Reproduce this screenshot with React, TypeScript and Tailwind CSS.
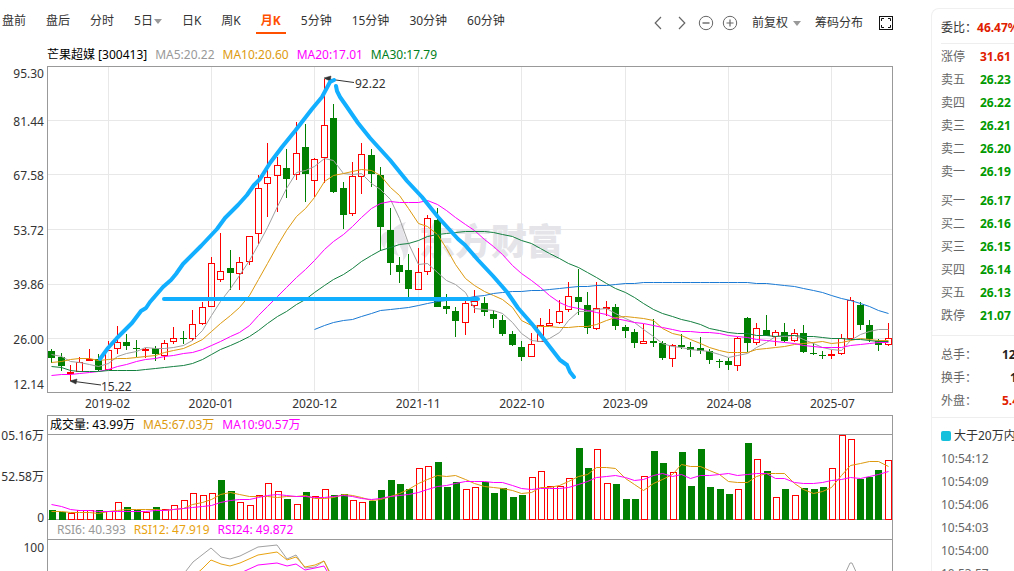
import React from 'react';

type Candle = [dir: 'u' | 'd', high: number, top: number, bottom: number, low: number];

const candles: Candle[] = [
  ['d', 349, 351, 358, 363], ['d', 353, 357, 366, 371], ['u', 365, 372, 373, 381],
  ['u', 357, 362, 371, 372], ['u', 349, 359, 360, 361], ['d', 354, 359, 370, 371],
  ['u', 341, 350, 369, 370], ['u', 326, 342, 348, 354], ['d', 334, 342, 346, 350],
  ['d', 340, 348, 349, 357], ['u', 348, 349, 350, 358], ['d', 346, 348, 354, 361],
  ['u', 340, 343, 355, 360], ['u', 327, 338, 341, 344], ['d', 331, 338, 339, 344],
  ['u', 310, 324, 338, 341], ['u', 302, 307, 323, 325], ['u', 257, 263, 306, 306],
  ['u', 233, 271, 279, 282], ['d', 250, 268, 273, 290], ['u', 257, 262, 273, 290],
  ['u', 236, 236, 261, 265], ['u', 175, 188, 233, 244], ['u', 143, 177, 183, 217],
  ['u', 157, 165, 175, 212], ['d', 149, 168, 179, 198], ['u', 122, 153, 174, 180],
  ['d', 124, 147, 174, 202], ['u', 158, 159, 180, 197], ['u', 79, 125, 157, 183],
  ['d', 104, 118, 192, 193], ['d', 182, 188, 215, 229], ['u', 162, 176, 213, 216],
  ['u', 143, 154, 176, 194], ['d', 149, 155, 174, 187], ['d', 167, 175, 227, 251],
  ['d', 208, 230, 263, 275], ['d', 257, 265, 272, 283], ['d', 254, 270, 289, 297],
  ['u', 248, 272, 289, 290], ['u', 215, 218, 271, 275], ['d', 208, 220, 307, 307],
  ['d', 294, 306, 309, 314], ['d', 307, 311, 321, 337], ['u', 300, 303, 322, 335],
  ['u', 290, 301, 305, 313], ['d', 297, 303, 312, 316], ['d', 310, 314, 319, 328],
  ['d', 315, 320, 334, 336], ['d', 331, 334, 345, 346], ['d', 341, 347, 357, 361],
  ['u', 333, 344, 356, 357], ['u', 318, 325, 341, 342], ['u', 309, 323, 325, 326],
  ['u', 300, 311, 322, 324], ['u', 282, 296, 309, 312], ['d', 269, 297, 302, 315],
  ['d', 292, 305, 328, 334], ['u', 282, 308, 328, 330], ['u', 301, 307, 308, 316],
  ['d', 304, 307, 326, 330], ['d', 325, 327, 331, 338], ['d', 329, 332, 343, 348],
  ['u', 324, 341, 343, 344], ['d', 319, 341, 343, 347], ['d', 341, 343, 358, 360],
  ['u', 344, 345, 358, 367], ['d', 334, 345, 347, 349], ['d', 342, 347, 350, 357],
  ['d', 337, 348, 351, 354], ['d', 349, 351, 360, 364], ['d', 359, 361, 362, 368],
  ['d', 358, 361, 365, 370], ['u', 337, 338, 365, 371], ['d', 317, 318, 343, 352],
  ['u', 323, 328, 342, 345], ['d', 315, 330, 336, 336], ['u', 330, 332, 336, 346],
  ['d', 323, 332, 341, 342], ['u', 329, 333, 340, 342], ['d', 325, 333, 352, 353],
  ['d', 343, 353, 354, 355], ['d', 351, 355, 356, 359], ['u', 350, 354, 355, 359],
  ['u', 334, 338, 353, 355], ['u', 297, 300, 338, 339], ['d', 302, 305, 325, 330],
  ['d', 320, 325, 339, 342], ['d', 339, 341, 345, 351], ['u', 323, 338, 344, 346],
];

const ma5 = [
  354, 356, 361, 362, 364, 366, 363, 356, 353, 351, 347, 348, 348, 347, 345, 340, 330, 315, 301, 288,
  275, 260, 244, 227, 206, 188, 172, 170, 166, 158, 160, 173, 174, 173, 183, 189, 199, 218, 243, 264,
  263, 272, 280, 284, 292, 308, 309, 310, 313, 322, 333, 340, 341, 338, 332, 320, 311, 311, 309, 308,
  313, 318, 322, 329, 336, 343, 346, 347, 349, 350, 351, 354, 357, 355, 353, 347, 342, 336, 336, 335,
  339, 343, 347, 349, 350, 340, 334, 331, 329, 329,
];
const ma10 = [
  362, 361, 359, 358, 358, 360, 359, 358, 358, 357, 356, 355, 352, 350, 348, 344, 339, 331, 323, 315,
  307, 295, 279, 263, 245, 230, 216, 208, 197, 181, 175, 173, 171, 169, 170, 175, 187, 195, 208, 223,
  226, 234, 248, 264, 278, 285, 291, 295, 299, 307, 320, 325, 326, 326, 327, 327, 326, 326, 324, 320,
  317, 316, 317, 318, 320, 328, 333, 335, 339, 343, 347, 350, 352, 352, 352, 349, 348, 347, 346, 344,
  343, 342, 341, 343, 342, 340, 338, 339, 340, 340,
];
const ma20 = [
  375, 374, 374, 373, 372, 371, 369, 366, 364, 361, 359, 358, 356, 355, 353, 352, 349, 345, 341, 336,
  332, 325, 315, 306, 296, 287, 277, 269, 260, 249, 241, 234, 226, 217, 208, 203, 201, 202, 202, 202,
  200, 204, 210, 217, 224, 230, 239, 246, 254, 265, 273, 280, 287, 295, 302, 306, 308, 310, 312, 314,
  318, 320, 322, 323, 325, 327, 329, 331, 331, 332, 332, 333, 335, 336, 337, 339, 340, 341, 342, 343,
  345, 346, 347, 347, 347, 345, 344, 343, 342, 342,
];
const ma30 = [
  366, 367, 370, 371, 371, 371, 370, 370, 370, 370, 369, 368, 367, 366, 365, 363, 359, 354, 349, 345,
  341, 336, 330, 323, 316, 311, 304, 299, 292, 285, 279, 274, 268, 261, 255, 250, 247, 244, 243, 240,
  236, 234, 233, 232, 231, 231, 231, 232, 234, 236, 240, 243, 248, 253, 258, 263, 267, 272, 277, 283,
  288, 292, 297, 303, 309, 313, 316, 319, 321, 324, 328, 330, 332, 333, 333, 335, 335, 336, 335, 335,
  336, 336, 337, 338, 338, 339, 339, 340, 341, 341,
];
// long average, only available from the 29th month on
const ma60 = [
  329, 325, 322, 320, 319, 316, 313, 310, 309, 308, 307, 305, 303, 301, 300, 299, 298, 296, 295, 293,
  292, 291, 291, 290, 290, 289, 288, 287, 286, 286, 285, 285, 284, 283, 283, 282, 282, 282, 282, 282,
  282, 282, 282, 282, 282, 282, 282, 283, 283, 284, 285, 286, 288, 290, 292, 295, 298, 300, 303, 306,
  310, 313,
];

const volumes = [
  510, 512, 513, 510, 510, 510, 511, 502, 507, 510, 512, 507, 509, 505, 500, 493, 495, 493, 480, 491,
  502, 505, 495, 483, 491, 499, 504, 492, 496, 489, 495, 494, 500, 502, 501, 490, 480, 484, 489, 468,
  466, 462, 487, 482, 489, 487, 482, 493, 488, 497, 495, 477, 471, 486, 486, 478, 448, 468, 449, 483,
  484, 499, 499, 476, 451, 463, 472, 452, 486, 449, 487, 489, 494, 489, 443, 459, 471, 497, 489, 495,
  488, 489, 487, 468, 435, 439, 479, 477, 470, 460,
];
const volMa5 = [
  511, 511, 512, 512, 512, 513, 511, 510, 509, 509, 509, 509, 510, 509, 508, 504, 502, 499, 494, 492,
  494, 496, 496, 496, 497, 496, 496, 495, 498, 498, 497, 494, 495, 497, 500, 499, 496, 493, 489, 483,
  479, 475, 476, 475, 479, 483, 486, 487, 488, 490, 493, 492, 487, 487, 485, 481, 476, 474, 467, 467,
  468, 478, 484, 490, 483, 479, 474, 464, 466, 466, 470, 474, 481, 482, 482, 476, 473, 473, 473, 483,
  489, 493, 491, 487, 475, 465, 463, 461, 461, 466,
];
const volMa10 = [
  504, 506, 509, 510, 510, 511, 511, 511, 511, 511, 511, 510, 510, 509, 508, 507, 506, 505, 502, 500,
  499, 499, 497, 495, 494, 495, 496, 496, 497, 497, 496, 495, 496, 498, 499, 498, 496, 495, 494, 492,
  489, 486, 485, 483, 481, 481, 481, 482, 482, 485, 488, 489, 488, 488, 488, 487, 484, 481, 477, 476,
  475, 477, 480, 479, 475, 473, 476, 474, 478, 475, 475, 474, 473, 475, 474, 473, 473, 478, 478, 482,
  483, 483, 482, 480, 479, 477, 478, 476, 474, 471,
];

const colX = (i: number) => Math.floor(51.7 + i * 9.4) + 0.5;
const toPoints = (ys: number[], start = 0) => ys.map((y, i) => `${colX(i + start)},${y + 0.5}`).join(' ');

const periods = ['盘前', '盘后', '分时', '5日', '日K', '周K', '月K', '5分钟', '15分钟', '30分钟', '60分钟'];
const prices = ['95.30', '81.44', '67.58', '53.72', '39.86', '26.00', '12.14'];
const months = ['2019-02', '2020-01', '2020-12', '2021-11', '2022-10', '2023-09', '2024-08', '2025-07'];

const sells = [
  ['涨停', '31.61'], ['卖五', '26.23'], ['卖四', '26.22'], ['卖三', '26.21'], ['卖二', '26.20'], ['卖一', '26.19'],
];
const buys = [
  ['买一', '26.17'], ['买二', '26.16'], ['买三', '26.15'], ['买四', '26.14'], ['买五', '26.13'], ['跌停', '21.07'],
];
const ticks = ['10:54:12', '10:54:09', '10:54:06', '10:54:03', '10:54:00', '10:53:57'];

const Caret = () => (
  <svg width="8" height="5" viewBox="0 0 8 5" aria-hidden="true">
    <path d="M0 0h8L4 5z" fill="#999" />
  </svg>
);

const Toolbar = () => (
  <header className="flex h-[46px] items-start justify-between text-[#333]">
    <nav className="flex gap-[10px] pl-[-3px]">
      {periods.map((p) => (
        <button
          key={p}
          type="button"
          className={
            p === '月K'
              ? 'flex h-[34px] items-center gap-px border-b-2 border-[#ff5000] px-[5px] pt-[10px] font-bold text-[#ff5000]'
              : 'flex h-[34px] items-center gap-px border-b-2 border-transparent px-[5px] pt-[10px] first:pl-[2px]'
          }
        >
          {p}
          {p === '5日' && <Caret />}
        </button>
      ))}
    </nav>
    <div className="flex h-[46px] items-center">
      <button type="button" aria-label="左移" className="mr-4">
        <svg width="8" height="14" viewBox="0 0 8 14" fill="none" stroke="#666" strokeWidth="1.2">
          <path d="M7 1L1.2 7L7 13" />
        </svg>
      </button>
      <button type="button" aria-label="右移" className="mr-3">
        <svg width="8" height="14" viewBox="0 0 8 14" fill="none" stroke="#666" strokeWidth="1.2">
          <path d="M1 1L6.8 7L1 13" />
        </svg>
      </button>
      <button type="button" aria-label="缩小" className="mr-2">
        <svg width="16" height="16" viewBox="0 0 16 16" fill="none" stroke="#666">
          <circle cx="8" cy="8" r="6.7" />
          <path d="M4.5 8h7" strokeWidth="1.4" />
        </svg>
      </button>
      <button type="button" aria-label="放大" className="mr-[14px]">
        <svg width="16" height="16" viewBox="0 0 16 16" fill="none" stroke="#666">
          <circle cx="8" cy="8" r="6.7" />
          <path d="M4.5 8h7M8 4.5v7" strokeWidth="1.2" />
        </svg>
      </button>
      <button type="button" className="mr-[14px] flex items-center gap-[5px]">
        前复权
        <Caret />
      </button>
      <button type="button" className="mr-4">筹码分布</button>
      <button type="button" aria-label="全屏">
        <svg width="14" height="14" viewBox="0 0 14 14" fill="none" stroke="#111">
          <rect x="0.5" y="0.5" width="13" height="13" />
          <path d="M2.5 5V2.5H5M9 2.5h2.5V5M11.5 9v2.5H9M5 11.5H2.5V9" />
        </svg>
      </button>
    </div>
  </header>
);

const PriceChart = () => (
  <svg viewBox="47 66 846 327" className="block h-auto w-full" fill="none" role="img" aria-label="月K线">
    <g stroke="#e8e8e8">
      {[120, 174, 229, 284, 338].map((y) => (
        <path key={y} d={`M48 ${y}.5H892`} />
      ))}
      {[6, 17, 28, 39, 50, 61, 72, 83].map((i) => (
        <path key={i} d={`M${colX(i)} 67V391`} />
      ))}
    </g>
    <g fill="#e4e4e9">
      <path d="M381 239c0-6 5-8 12-9c1-3 6-6 13-8c-5 7-2 13 1 19c3 7 1 14-4 20c1-9-2-14-7-19c-1 5 0 9 3 14c-7-2-10-7-10-16c-3 2-4 5-4 9c-3-3-4-6-4-10z" />
      <text x="419" y="255" fontSize="36" fontWeight="900">东方财富</text>
    </g>
    {candles.map(([dir, high, top, bottom, low], i) => {
      const x = colX(i);
      return dir === 'u' ? (
        <g key={i} stroke="#f00">
          <path d={`M${x} ${high}V${top}M${x} ${bottom}V${low}`} />
          <rect x={x - 3} y={top + 0.5} width="6" height={bottom - top} />
        </g>
      ) : (
        <g key={i}>
          <path d={`M${x} ${high}V${low}`} stroke="#008000" />
          <rect x={x - 3.5} y={top} width="7" height={bottom - top} fill="#008000" />
        </g>
      );
    })}
    <polyline points={toPoints(ma5)} stroke="#a0a0a0" />
    <polyline points={toPoints(ma10)} stroke="#dd9a10" />
    <polyline points={toPoints(ma20)} stroke="#f0f" />
    <polyline points={toPoints(ma30)} stroke="#148040" />
    <polyline points={toPoints(ma60, 28)} stroke="#1a7ad4" />
    <rect x="47.5" y="66.5" width="845" height="326" stroke="#999" />

    <g stroke="#333">
      <path d="M325 78.5L354 82.5M71 381L101 385" />
      <path d="M324 78l7-2l-1 5zM70 381l7-2l-1 5z" fill="#333" strokeWidth="0.5" />
    </g>
    <g fill="#333" fontSize="12">
      <text x="355" y="88">92.22</text>
      <text x="101" y="391">15.22</text>
    </g>

    {/* trend lines drawn by hand */}
    <g stroke="#12aeff" strokeWidth="4" strokeLinecap="round" strokeLinejoin="round">
      <path d="M100 359L108 348L117 338L132 323L141 311L146 308L150 302L163 287L171 280L176 274L183 264L201 246L217 229L225 218L238 205L247 195L254 185L260 179L270 163L282 147L295 131L312 109L322 97L330 82L334 80" />
      <path d="M336 86L337 91L340 97L347 107L358 123L370 138L390 160L407 181L422 197L438 217L458 239L465 245L478 260L493 276L507 292L518 308L532 324L543 338L560 360L567 365L570 372L574 377" />
      <path d="M164 299H478" />
    </g>
  </svg>
);

const VolumeChart = () => (
  <svg viewBox="47 434 846 86" className="block h-auto w-full" fill="none" role="img" aria-label="成交量">
    <rect x="47.5" y="434.5" width="845" height="85" stroke="#999" />
    {volumes.map((top, i) => {
      const x = colX(i) + (i > 85 ? 0 : 0.5);
      // 2019-10 traded up and 2020-02 traded down against the candle colour
      const up = i === 14 || (candles[i][0] === 'u' && i !== 18);
      const left = Math.floor(x) - 3;
      return up ? (
        <rect key={i} x={left + 0.5} y={top + 0.5} width="6" height={519 - top} stroke="#f00" />
      ) : (
        <rect key={i} x={left} y={top} width="7" height={520 - top} fill="#008000" />
      );
    })}
    <polyline points={toPoints(volMa5)} stroke="#dd9a10" />
    <polyline points={toPoints(volMa10)} stroke="#f0f" />
  </svg>
);

const RsiChart = () => (
  <svg viewBox="47 539 846 80" className="block h-auto w-full" fill="none" role="img" aria-label="RSI">
    <rect x="47.5" y="539.5" width="845" height="79" stroke="#999" />
    <polyline points="182,576 193,562 211,548 221,557 230,559 240,556 258,547 277,545 287,559 296,555 305,568 315,567 324,561 332,576" stroke="#a0a0a0" />
    <polyline points="194,576 202,569 211,560 221,564 230,566 240,563 258,555 277,552 287,560 296,557 305,567 315,565 324,561 331,576" stroke="#e9a310" />
    <polyline points="234,576 247,570 258,565 277,563 287,566 296,564 305,570 315,568 324,566 330,576" stroke="#f0f" />
    <polyline points="844,576 850,563 852,563 858,576" stroke="#a0a0a0" />
  </svg>
);

const Quotes = ({ rows }: { rows: string[][] }) => (
  <table className="w-full">
    <tbody>
      {rows.map(([label, price]) => (
        <tr key={label} className="h-[23px]">
          <th className="w-[39px] text-left font-normal text-[#666]">{label}</th>
          <td className={price === '31.61' ? 'font-bold text-[#e02000]' : 'font-bold text-[#009900]'}>{price}</td>
        </tr>
      ))}
    </tbody>
  </table>
);

const Sidebar = () => (
  <aside className="mt-2 w-[83px] shrink-0 overflow-hidden rounded-tl-lg border-t border-l border-[#f0f0f0] whitespace-nowrap">
    <div className="ml-[9px] flex h-[35px] items-center border-b border-[#eee] pt-1 text-[#333]">
      委比：<b className="text-[#e02000]">46.47%</b>
    </div>
    <div className="pt-px pl-[9px] text-[13px]">
      <div className="text-xs">
        <Quotes rows={sells} />
        <div className="h-[6px]" />
        <Quotes rows={buys} />
      </div>
    </div>
    <dl className="mt-2 grid grid-cols-[61px_1fr] border-t border-[#eee] py-[5px] pl-[9px] leading-[23px] text-[#666]">
      <dt className="pt-[2px]">总手：</dt>
      <dd className="pt-[2px] font-bold text-[#222]">12</dd>
      <dt>换手：</dt>
      <dd className="pl-2 font-bold text-[#222]">1</dd>
      <dt>外盘：</dt>
      <dd className="font-bold text-[#e02000]">5.4</dd>
    </dl>
    <div className="border-t border-[#eee] pt-[6px] pl-[9px] leading-[23px]">
      <p className="flex items-center gap-[3px] text-[#333]">
        <span className="size-[10px] shrink-0 rounded-xs bg-[#14c0dc]" />
        大于20万内
      </p>
      <ul className="text-[#666]">
        {ticks.map((t) => (
          <li key={t}>{t}</li>
        ))}
      </ul>
    </div>
  </aside>
);

export default function App() {
  return (
    <div className="flex h-screen gap-[38px] overflow-hidden bg-white font-['Noto_Sans','Noto_Sans_CJK_SC',sans-serif] text-xs text-[#333]">
      <main className="min-w-0 flex-1">
        <Toolbar />
        <div className="flex h-5 gap-2 pl-[47px] leading-[18px]">
          <span className="text-black">芒果超媒 [300413]</span>
          <span className="text-[#999]">MA5:20.22</span>
          <span className="text-[#dd9a10]">MA10:20.60</span>
          <span className="text-[#f0f]">MA20:17.01</span>
          <span className="text-[#008020]">MA30:17.79</span>
        </div>
        <div className="grid grid-cols-[47px_minmax(0,1fr)]">
          <div className="grid grid-rows-[14fr_repeat(5,27fr)_13fr] pr-[3px] text-right leading-4">
            {prices.map((p) => (
              <span key={p} className="self-center first:self-start last:self-end">{p}</span>
            ))}
          </div>
          <PriceChart />

          <div className="col-start-2 flex h-[22px] items-center justify-between pr-[38px] pl-[38px]">
            {months.map((m) => (
              <span key={m}>{m}</span>
            ))}
          </div>

          <div className="col-start-2 flex h-[19px] gap-2 border-x border-t border-[#999] pl-[2px] leading-[18px]">
            <span className="text-black">成交量: 43.99万</span>
            <span className="text-[#dd9a10]">MA5:67.03万</span>
            <span className="text-[#f0f]">MA10:90.57万</span>
          </div>
          <div className="-my-[6px] flex flex-col items-end justify-between pr-[3px] leading-4">
            <span>05.16万</span>
            <span>52.58万</span>
            <span>0</span>
          </div>
          <VolumeChart />

          <div className="col-start-2 flex h-[19px] gap-2 border-x border-[#999] pl-[9px] leading-[20px]">
            <span className="text-[#999]">RSI6: 40.393</span>
            <span className="text-[#e9a310]">RSI12: 47.919</span>
            <span className="text-[#f0f]">RSI24: 49.872</span>
          </div>
          <div className="pr-[3px] text-right leading-[18px]">100</div>
          <RsiChart />
        </div>
      </main>
      <Sidebar />
    </div>
  );
}
